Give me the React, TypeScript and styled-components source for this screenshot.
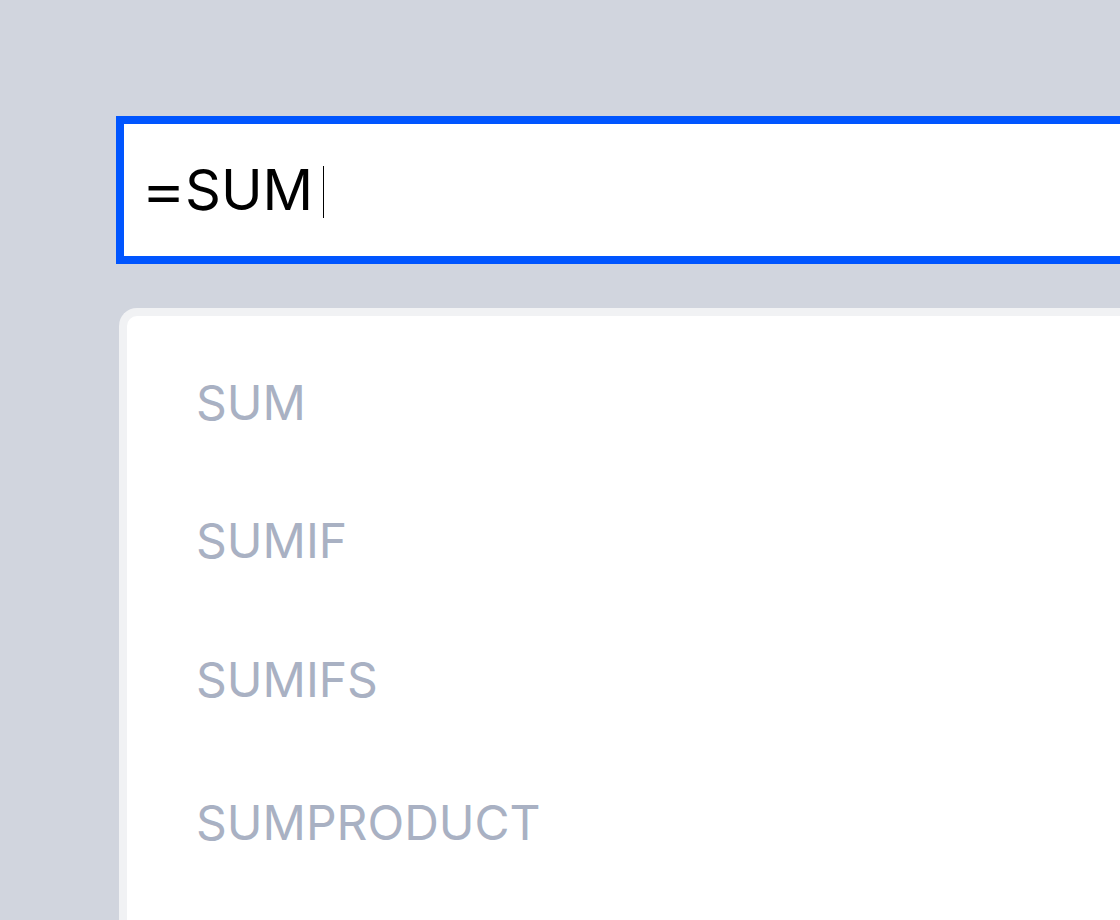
import styled, { createGlobalStyle } from 'styled-components'

const Global = createGlobalStyle`
  html, body {
    margin: 0;
    background: #d1d5de;
    font-family: Inter, 'Liberation Sans', sans-serif;
  }
`

const Page = styled.div`
  display: flex;
  flex-direction: column;
  gap: 44px;
  padding: 116px 0 0 116px;
  height: 920px;
  box-sizing: border-box;
  overflow: hidden;
`

const FormulaBox = styled.div`
  display: flex;
  align-items: center;
  height: 148px;
  box-sizing: border-box;
  border: 8px solid #0055ff;
  border-right: none;
  background: #fff;
  padding-left: 17px;
  font-size: 56px;
  color: #000;
`

// the equals sign in the reference is drawn wider than Inter's
const Sign = styled.span`
  display: inline-block;
  width: 44px;
  flex-shrink: 0;
  transform: scaleX(1.22);
  transform-origin: left center;
`

const Caret = styled.span`
  display: inline-block;
  width: 1px;
  height: 52px;
  background: #000;
  margin-left: 10px;
  margin-top: 4px;
`

const Dropdown = styled.ul`
  list-style: none;
  margin: 0 0 0 3px;
  padding: 17px 0 0 69px;
  flex: 1;
  background: #fff;
  border: 8px solid #f1f2f4;
  border-right: none;
  border-bottom: none;
  border-top-left-radius: 18px;
`

const Option = styled.li<{ $h: number }>`
  display: flex;
  align-items: center;
  height: ${(p) => p.$h}px;
  font-size: 48px;
  color: #a9b1c3;
`

const options = [
  { name: 'SUM', h: 138 },
  { name: 'SUMIF', h: 138 },
  { name: 'SUMIFS', h: 140 },
  { name: 'SUMPRODUCT', h: 146 },
]

export default function App() {
  return (
    <>
      <Global />
      <Page>
        <FormulaBox>
          <Sign>=</Sign>SUM
          <Caret />
        </FormulaBox>
        <Dropdown>
          {options.map((o) => (
            <Option key={o.name} $h={o.h}>
              {o.name}
            </Option>
          ))}
        </Dropdown>
      </Page>
    </>
  )
}
